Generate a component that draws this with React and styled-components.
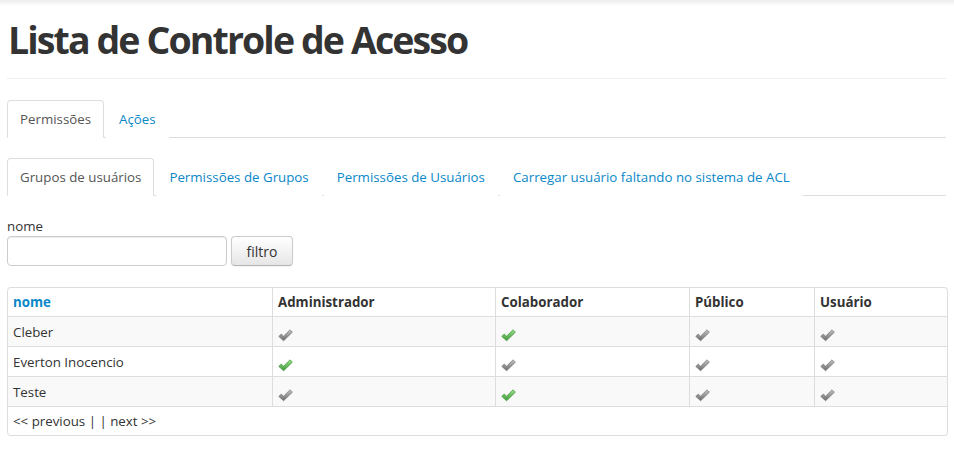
import React from "react";
import styled, { createGlobalStyle } from "styled-components";

const GlobalStyle = createGlobalStyle`
  html, body { margin: 0; padding: 0; background: #fff; }
  body {
    font-family: "Open Sans", "Noto Sans", sans-serif;
    font-size: 13.3px;
    line-height: 20px;
    color: #333;
  }
  * { box-sizing: border-box; }
`;

const TopShadow = styled.div`
  height: 6px;
  background: linear-gradient(to bottom, #ececec, #fff);
`;

const Page = styled.div`
  padding: 0 8px 0 7px;
`;

const Header = styled.div`
  padding-top: 14px;
  padding-bottom: 18px;
  border-bottom: 1px solid #eee;
`;

const Title = styled.h1`
  margin: 0 0 0 1px;
  font-size: 37.5px;
  line-height: 40px;
  font-weight: 700;
  letter-spacing: -1.9px;
  color: #333;
`;

const Tabs = styled.ul`
  display: flex;
  list-style: none;
  margin: ${(p) => p.$top}px 0 20px;
  padding: 0;
  border-bottom: 1px solid #ddd;
`;

const Tab = styled.li`
  margin-bottom: -1px;
  margin-right: 2px;
  padding: 8px 12px;
  line-height: 20px;
  border: 1px solid ${(p) => (p.$active ? "#ddd" : "transparent")};
  border-bottom-color: ${(p) => (p.$active ? "#fff" : "transparent")};
  border-radius: 4px 4px 0 0;
  background: #fff;
  color: ${(p) => (p.$active ? "#555" : "#0a88c8")};
  cursor: pointer;
`;

const Label = styled.label`
  display: block;
  line-height: 20px;
  color: #333;
`;

const FilterRow = styled.div`
  display: flex;
  gap: 4px;
  margin-bottom: 21px;
`;

const Input = styled.input`
  width: 220px;
  height: 30px;
  border: 1px solid #ccc;
  border-radius: 4px;
  box-shadow: inset 0 1px 1px rgba(0, 0, 0, 0.075);
  padding: 4px 6px;
  font: inherit;
`;

const Button = styled.button`
  width: 62px;
  height: 30px;
  border: 1px solid #ccc;
  border-bottom-color: #b3b3b3;
  border-radius: 4px;
  background: linear-gradient(to bottom, #fff, #e6e6e6);
  box-shadow: inset 0 1px 0 rgba(255, 255, 255, 0.2), 0 1px 2px rgba(0, 0, 0, 0.05);
  font-family: inherit;
  font-size: 14px;
  color: #333;
  padding: 0;
`;

const Table = styled.table`
  width: 940px;
  border-collapse: separate;
  border-spacing: 0;
  border: 1px solid #ddd;
  border-left: 0;
  border-radius: 4px;
  table-layout: fixed;
`;

const Col = styled.col`
  width: ${(p) => p.$w}px;
`;

const Th = styled.th`
  text-align: left;
  font-weight: 700;
  font-size: 13.3px;
  padding: 4px 5px;
  line-height: 20px;
  border-left: 1px solid #ddd;
  color: ${(p) => (p.$link ? "#0a88c8" : "#333")};
  &:first-child { border-top-left-radius: 4px; }
  &:last-child { border-top-right-radius: 4px; }
`;

const Row = styled.tr`
  background: ${(p) => (p.$striped ? "#f9f9f9" : "#fff")};
`;

const Td = styled.td`
  padding: 5px 5px 4px;
  line-height: 20px;
  border-left: 1px solid #ddd;
  border-top: 1px solid #ddd;
  vertical-align: middle;
`;

const FootCell = styled.td`
  padding: 4px 5px;
  line-height: 20px;
  border-left: 1px solid #ddd;
  border-top: 1px solid #ddd;
  border-bottom-left-radius: 4px;
  border-bottom-right-radius: 4px;
`;

const CheckWrap = styled.span`
  display: inline-block;
  width: 15px;
  height: 13px;
  vertical-align: middle;
  margin-top: 1px;
`;

function Check({ on }) {
  const id = on ? "gGreen" : "gGray";
  return (
    <CheckWrap>
      <svg width="15" height="13" viewBox="0 0 15 13">
        <defs>
          <linearGradient id={id} x1="0" y1="0" x2="0" y2="1">
            {on ? (
              <>
                <stop offset="0" stopColor="#9ae08a" />
                <stop offset="1" stopColor="#3c9a37" />
              </>
            ) : (
              <>
                <stop offset="0" stopColor="#c4c4c4" />
                <stop offset="1" stopColor="#6a6a6a" />
              </>
            )}
          </linearGradient>
        </defs>
        <path
          d="M0.8 7.4 L3.2 5 L5.6 7.2 L12 0.8 L14.4 3.2 L5.6 11.8 Z"
          fill={`url(#${id})`}
          stroke={on ? "#3d8f38" : "#777"}
          strokeWidth="0.7"
          strokeLinejoin="round"
        />
      </svg>
    </CheckWrap>
  );
}

const columns = [
  { name: "nome", w: 265, link: true },
  { name: "Administrador", w: 223 },
  { name: "Colaborador", w: 194 },
  { name: "Público", w: 125 },
  { name: "Usuário", w: 133 },
];

const rows = [
  { name: "Cleber", perms: [false, true, false, false] },
  { name: "Everton Inocencio", perms: [true, false, false, false] },
  { name: "Teste", perms: [false, true, false, false] },
];

export default function App() {
  return (
    <>
      <GlobalStyle />
      <TopShadow />
      <Page>
        <Header>
          <Title>Lista de Controle de Acesso</Title>
        </Header>
        <Tabs $top={21}>
          <Tab $active>Permissões</Tab>
          <Tab>Ações</Tab>
        </Tabs>
        <Tabs $top={0}>
          <Tab $active>Grupos de usuários</Tab>
          <Tab>Permissões de Grupos</Tab>
          <Tab>Permissões de Usuários</Tab>
          <Tab>Carregar usuário faltando no sistema de ACL</Tab>
        </Tabs>
        <Label htmlFor="nome">nome</Label>
        <FilterRow>
          <Input id="nome" type="text" />
          <Button>filtro</Button>
        </FilterRow>
        <Table>
          <colgroup>
            {columns.map((c) => (
              <Col key={c.name} $w={c.w} />
            ))}
          </colgroup>
          <thead>
            <tr>
              {columns.map((c) => (
                <Th key={c.name} $link={c.link}>
                  {c.name}
                </Th>
              ))}
            </tr>
          </thead>
          <tbody>
            {rows.map((r, i) => (
              <Row key={r.name} $striped={i % 2 === 0}>
                <Td>{r.name}</Td>
                {r.perms.map((p, j) => (
                  <Td key={j}>
                    <Check on={p} />
                  </Td>
                ))}
              </Row>
            ))}
            <Row>
              <FootCell colSpan={5}>&lt;&lt; previous | | next &gt;&gt;</FootCell>
            </Row>
          </tbody>
        </Table>
      </Page>
    </>
  );
}
